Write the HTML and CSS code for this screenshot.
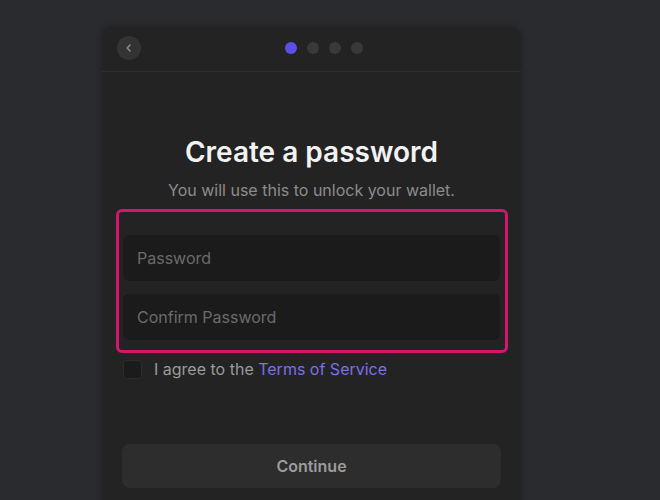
FILE: index.html
```html
<!DOCTYPE html>
<html lang="en">
<head>
    <meta charset="UTF-8">
    <meta name="viewport" content="width=device-width, initial-scale=1.0">
    <title>Create a password</title>
    <link rel="stylesheet" href="styles.css">
</head>
<body>
    <div class="onboard-card">
        <div class="onboard-header">
            <button class="back-btn" type="button" aria-label="Back">
                <svg width="10" height="10" viewBox="0 0 10 10">
                    <path d="M6 2 L3.2 5 L6 8" fill="none" stroke="#8a8a8a" stroke-width="1.6" stroke-linecap="round" stroke-linejoin="round"/>
                </svg>
            </button>
            <div class="steps">
                <span class="dot active"></span>
                <span class="dot"></span>
                <span class="dot"></span>
                <span class="dot"></span>
            </div>
        </div>

        <div class="onboard-body">
            <h2>Create a password</h2>
            <p class="subtitle">You will use this to unlock your wallet.</p>

            <div class="field-group">
                <input type="password" placeholder="Password">
                <input type="password" placeholder="Confirm Password">
            </div>

            <label class="agree">
                <span class="checkbox"></span>
                <span>I agree to the <a href="#">Terms of Service</a></span>
            </label>

            <button class="continue-btn" type="button">Continue</button>
        </div>
    </div>
</body>
</html>
```

FILE: styles.css
```css
body {
    font-family: Inter, "Noto Sans", sans-serif;
    background-color: #2a2b2f;
    margin: 0;
    height: 500px;
    overflow: hidden;
}
.onboard-card {
    margin: 27px 0 0 102px;
    width: 419px;
    height: 480px;
    background-color: #232323;
    border-radius: 10px 10px 0 0;
    box-shadow: 0 0 6px rgba(0, 0, 0, 0.3);
}
.onboard-header {
    display: flex;
    align-items: center;
    height: 42px;
    padding: 0 15px 2px;
    border-bottom: 1px solid #2e2e2e;
}
.back-btn {
    width: 24px;
    height: 24px;
    border: none;
    border-radius: 50%;
    background-color: #333333;
    padding: 0;
    display: flex;
    align-items: center;
    justify-content: center;
}
.steps {
    flex: 1;
    display: flex;
    justify-content: center;
    gap: 10px;
}
.dot {
    width: 12px;
    height: 12px;
    border-radius: 50%;
    background-color: #393939;
}
.dot.active {
    background-color: #5a50e6;
}
.onboard-body {
    padding: 63px 21px 0;
    display: flex;
    flex-direction: column;
}
.onboard-body h2 {
    margin: 0;
    font-size: 28px;
    line-height: 34px;
    font-weight: 600;
    color: #f2f2f2;
    text-align: center;
}
.subtitle {
    margin: 11px 0 0;
    font-size: 16px;
    line-height: 20px;
    color: #8c8c8c;
    text-align: center;
}
.field-group {
    margin: 9px -8px 0 -7px;
    padding: 23px 5px 10px 4px;
    border: 3px solid #d4166f;
    border-radius: 6px;
    display: flex;
    flex-direction: column;
    gap: 13px;
}
.field-group input {
    height: 46px;
    padding: 0 14px;
    border: none;
    border-radius: 6px;
    background-color: #1b1b1b;
    font-family: inherit;
    font-size: 16px;
    color: #ddd;
    outline: none;
}
.field-group input::placeholder {
    color: #6b6b6b;
}
.agree {
    margin-top: 6px;
    display: flex;
    align-items: center;
    gap: 12px;
    font-size: 16px;
    line-height: 20px;
    color: #9a9a9a;
}
.checkbox {
    width: 19px;
    height: 19px;
    border-radius: 4px;
    background-color: #1b1b1b;
    box-shadow: inset 0 0 0 1px #2c2c2c;
}
.agree a {
    color: #7a70e8;
    text-decoration: none;
}
.continue-btn {
    margin: 65px -1px 0;
    height: 44px;
    border: none;
    border-radius: 8px;
    background-color: #2d2d2d;
    font-family: inherit;
    font-size: 16px;
    font-weight: 600;
    color: #9c9c9c;
}
```
